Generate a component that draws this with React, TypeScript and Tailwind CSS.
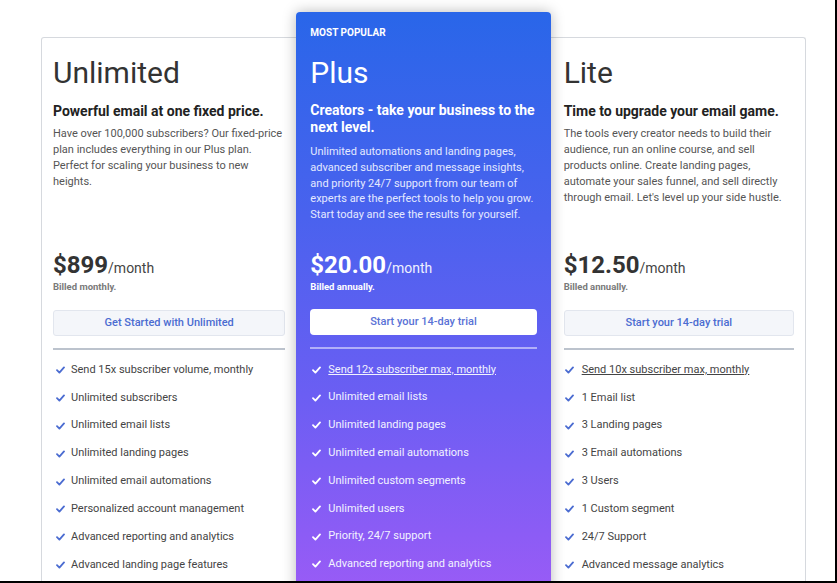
import React from "react";

type Plan = {
  name: string;
  subtitle: string;
  desc: string;
  price: string;
  billed: string;
  cta: string;
  features: string[];
  underlineFirst: boolean;
};

const plans: Plan[] = [
  {
    name: "Unlimited",
    subtitle: "Powerful email at one fixed price.",
    desc: "Have over 100,000 subscribers? Our fixed-price plan includes everything in our Plus plan. Perfect for scaling your business to new heights.",
    price: "$899",
    billed: "Billed monthly.",
    cta: "Get Started with Unlimited",
    features: [
      "Send 15x subscriber volume, monthly",
      "Unlimited subscribers",
      "Unlimited email lists",
      "Unlimited landing pages",
      "Unlimited email automations",
      "Personalized account management",
      "Advanced reporting and analytics",
      "Advanced landing page features",
    ],
    underlineFirst: false,
  },
  {
    name: "Plus",
    subtitle: "Creators - take your business to the next level.",
    desc: "Unlimited automations and landing pages, advanced subscriber and message insights, and priority 24/7 support from our team of experts are the perfect tools to help you grow. Start today and see the results for yourself.",
    price: "$20.00",
    billed: "Billed annually.",
    cta: "Start your 14-day trial",
    features: [
      "Send 12x subscriber max, monthly",
      "Unlimited email lists",
      "Unlimited landing pages",
      "Unlimited email automations",
      "Unlimited custom segments",
      "Unlimited users",
      "Priority, 24/7 support",
      "Advanced reporting and analytics",
    ],
    underlineFirst: true,
  },
  {
    name: "Lite",
    subtitle: "Time to upgrade your email game.",
    desc: "The tools every creator needs to build their audience, run an online course, and sell products online. Create landing pages, automate your sales funnel, and sell directly through email. Let's level up your side hustle.",
    price: "$12.50",
    billed: "Billed annually.",
    cta: "Start your 14-day trial",
    features: [
      "Send 10x subscriber max, monthly",
      "1 Email list",
      "3 Landing pages",
      "3 Email automations",
      "3 Users",
      "1 Custom segment",
      "24/7 Support",
      "Advanced message analytics",
    ],
    underlineFirst: true,
  },
];

function Check({ color }: { color: string }) {
  return (
    <svg width="9" height="8" viewBox="0 0 9 8" className="shrink-0">
      <path d="M1 4.2 L3.4 6.6 L8 1.4" fill="none" stroke={color} strokeWidth="1.8" strokeLinecap="round" strokeLinejoin="round" />
    </svg>
  );
}

function LightColumn({ plan, pad, listPad, gap }: { plan: Plan; pad: string; listPad: string; gap: string }) {
  return (
    <div className={`flex flex-col ${pad} pt-[17px]`}>
      <div className="h-[196px]">
        <div className="text-[30px] leading-[36px] text-[#333]">{plan.name}</div>
        <div className="mt-[11px] text-[14px] leading-[18px] font-bold text-[#222]">{plan.subtitle}</div>
        <div className="mt-[6px] text-[11px] leading-[16px] text-[#555]">{plan.desc}</div>
      </div>
      <div className="flex items-baseline leading-[28px]">
        <span className="text-[24px] font-bold text-[#333]">{plan.price}</span>
        <span className="text-[14px] text-[#444]">/month</span>
      </div>
      <div className="text-[9.5px] leading-[10px] font-bold text-[#7a7a7a]">{plan.billed}</div>
      <div className="mt-[18px] h-[26px] flex items-center justify-center rounded-[3px] border border-[#e2e6ee] bg-[#f4f6fa] text-[11px] font-medium text-[#4b6cd1]">
        {plan.cta}
      </div>
      <div className="mt-[12px] h-[2px] bg-[#bcc3cd]" />
      <ul className={`mt-[6px] ${listPad}`}>
        {plan.features.map((f, i) => (
          <li key={f} className={`flex items-center h-[27.9px] ${gap} text-[11px] text-[#444]`}>
            <Check color="#4b6cd1" />
            <span className={i === 0 && plan.underlineFirst ? "underline" : ""}>{f}</span>
          </li>
        ))}
      </ul>
    </div>
  );
}

function PlusColumn({ plan }: { plan: Plan }) {
  return (
    <div className="relative -mt-[26px] flex flex-col rounded-t-[4px] px-[14px] pt-[14px] pb-6 shadow-[0_0_14px_rgba(0,0,0,0.28)] bg-[linear-gradient(180deg,#2966e9_0%,#4a62ee_35%,#6b5ef3_65%,#9c5bf6_100%)] text-white">
      <div className="h-[14px] text-[10px] leading-[14px] font-bold">MOST POPULAR</div>
      <div className="mt-[15px] h-[198px]">
        <div className="text-[30px] leading-[36px]">{plan.name}</div>
        <div className="mt-[11px] text-[14px] leading-[17px] font-bold">{plan.subtitle}</div>
        <div className="mt-[8px] text-[11px] leading-[15.8px] text-[#e4e9ff]">{plan.desc}</div>
      </div>
      <div className="-mt-[2px] flex items-baseline leading-[28px]">
        <span className="text-[24px] font-bold">{plan.price}</span>
        <span className="text-[14px] text-[#eef0ff]">/month</span>
      </div>
      <div className="text-[9.5px] leading-[10px] font-bold">{plan.billed}</div>
      <div className="mt-[17px] h-[26px] flex items-center justify-center rounded-[4px] bg-white text-[11px] font-medium text-[#5a72d6]">
        {plan.cta}
      </div>
      <div className="mt-[12px] h-[2px] bg-white/50" />
      <ul className="mt-[7px] pl-[2px]">
        {plan.features.map((f, i) => (
          <li key={f} className="flex items-center h-[27.8px] gap-[7px] text-[11px] text-[#f2f3ff]">
            <Check color="#ffffff" />
            <span className={i === 0 ? "underline" : ""}>{f}</span>
          </li>
        ))}
      </ul>
    </div>
  );
}

export default function App() {
  return (
    <div
      className="relative w-[837px] h-[583px] overflow-hidden bg-white border-r-2 border-b-2 border-black"
      style={{ fontFamily: "Roboto, 'Noto Sans', sans-serif" }}
    >
      <div className="ml-[41px] mt-[37px] w-[765px] rounded-t-[3px] border border-b-0 border-[#d6d9de]">
        <div className="grid grid-cols-3">
          <LightColumn plan={plans[0]} pad="px-[11px]" listPad="pl-[3px]" gap="gap-[6px]" />
          <PlusColumn plan={plans[1]} />
          <LightColumn plan={plans[2]} pad="pl-[13px] pr-[11px]" listPad="pl-[1px]" gap="gap-[8px]" />
        </div>
      </div>
    </div>
  );
}
